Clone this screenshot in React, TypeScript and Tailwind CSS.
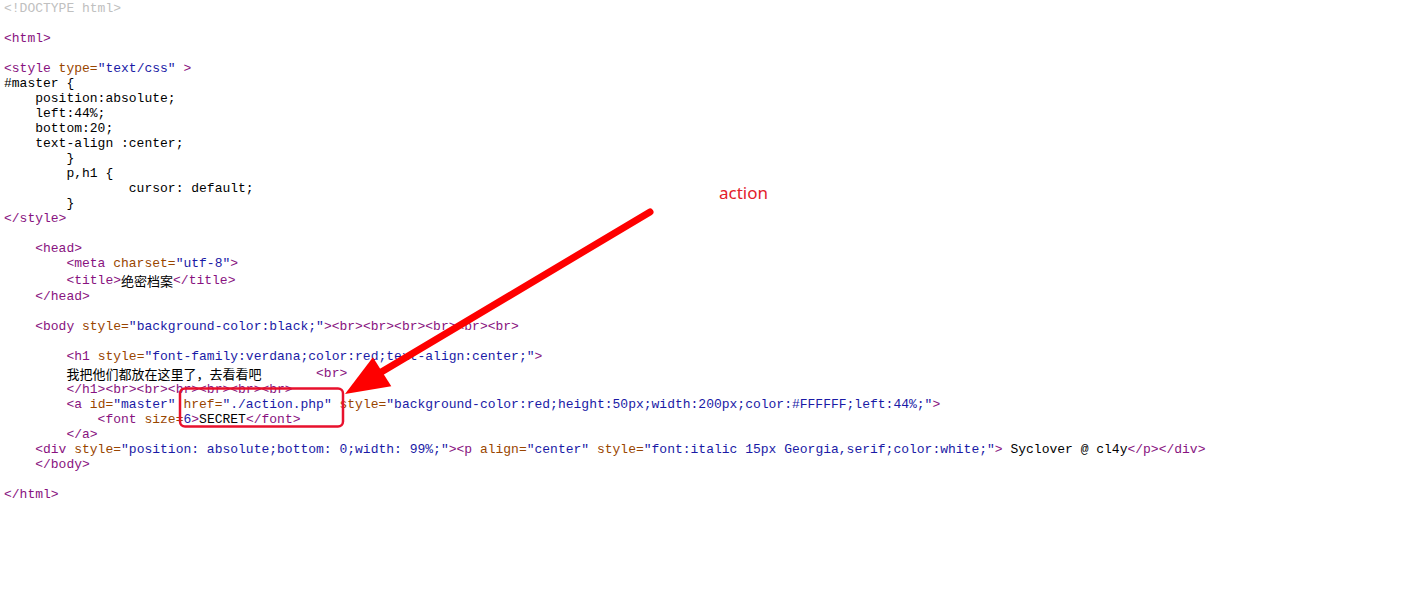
type Seg = [string, string];

// d: doctype, t: tag, a: attribute name, v: attribute value, x: plain text, c: cjk text
const tone: Record<string, string> = {
  d: 'text-[#c0c0c0]',
  t: 'text-[#881280]',
  a: 'text-[#994500]',
  v: 'text-[#1a1aa6]',
  x: 'text-black',
  c: "text-black font-['Noto_Sans_CJK_SC',sans-serif]",
};

const lines: { h?: string; segs: Seg[] }[] = [
  { segs: [['d', '<!DOCTYPE html>']] },
  { segs: [] },
  { segs: [['t', '<html>']] },
  { segs: [] },
  { segs: [['t', '<style '], ['a', 'type='], ['v', '"text/css"'], ['t', ' >']] },
  { segs: [['x', '#master {']] },
  { segs: [['x', '    position:absolute;']] },
  { segs: [['x', '    left:44%;']] },
  { segs: [['x', '    bottom:20;']] },
  { segs: [['x', '    text-align :center;']] },
  { segs: [['x', '        }']] },
  { segs: [['x', '        p,h1 {']] },
  { segs: [['x', '                cursor: default;']] },
  { segs: [['x', '        }']] },
  { segs: [['t', '</style>']] },
  { segs: [] },
  { segs: [['t', '    <head>']] },
  { segs: [['t', '        <meta '], ['a', 'charset='], ['v', '"utf-8"'], ['t', '>']] },
  { h: 'h-[18px]', segs: [['t', '        <title>'], ['c', '绝密档案'], ['t', '</title>']] },
  { segs: [['t', '    </head>']] },
  { segs: [] },
  {
    segs: [
      ['t', '    <body '],
      ['a', 'style='],
      ['v', '"background-color:black;"'],
      ['t', '><br><br><br><br><br><br>'],
    ],
  },
  { segs: [] },
  {
    segs: [
      ['t', '        <h1 '],
      ['a', 'style='],
      ['v', '"font-family:verdana;color:red;text-align:center;"'],
      ['t', '>'],
    ],
  },
  { h: 'h-[18px]', segs: [['x', '        '], ['c', '我把他们都放在这里了，去看看吧'], ['x', '       '], ['t', '<br>']] },
  { segs: [['t', '        </h1><br><br><br><br><br><br>']] },
  {
    segs: [
      ['t', '        <a '],
      ['a', 'id='],
      ['v', '"master"'],
      ['a', ' href='],
      ['v', '"./action.php"'],
      ['a', ' style='],
      ['v', '"background-color:red;height:50px;width:200px;color:#FFFFFF;left:44%;"'],
      ['t', '>'],
    ],
  },
  { segs: [['t', '            <font '], ['a', 'size='], ['v', '6'], ['t', '>'], ['x', 'SECRET'], ['t', '</font>']] },
  { segs: [['t', '        </a>']] },
  {
    segs: [
      ['t', '    <div '],
      ['a', 'style='],
      ['v', '"position: absolute;bottom: 0;width: 99%;"'],
      ['t', '><p '],
      ['a', 'align='],
      ['v', '"center"'],
      ['a', ' style='],
      ['v', '"font:italic 15px Georgia,serif;color:white;"'],
      ['t', '>'],
      ['x', ' Syclover @ cl4y'],
      ['t', '</p></div>'],
    ],
  },
  { segs: [['t', '    </body>']] },
  { segs: [] },
  { segs: [['t', '</html>']] },
];

function Arrow() {
  return (
    <svg
      className="absolute inset-0 pointer-events-none"
      width={1408}
      height={592}
      viewBox="0 0 1408 592"
    >
      <rect x={180} y={388.5} width={163} height={38} rx={5} fill="none" stroke="#e8112d" strokeWidth={2.5} />
      <line x1={650} y1={212} x2={378} y2={374} stroke="#fe0000" strokeWidth={7} strokeLinecap="round" />
      <polygon points="345,394 372.9,357.3 391.3,386.2" fill="#fe0000" />
    </svg>
  );
}

export default function App() {
  return (
    <div className="relative w-[1408px] h-[592px] bg-white overflow-hidden">
      <div className="pt-[1px] pl-[4px] font-['Liberation_Mono',monospace] text-[13px] leading-[15px] whitespace-pre">
        {lines.map((line, i) => (
          <div key={i} className={`${line.h ?? 'h-[15px]'} flex items-center`}>
            {line.segs.map(([k, text], j) => (
              <span key={j} className={tone[k]}>
                {text}
              </span>
            ))}
          </div>
        ))}
      </div>
      <Arrow />
      <div className="absolute left-[719px] top-[181px] font-['Noto_Sans',sans-serif] text-[17px] leading-[24px] text-[#e3202b]">
        action
      </div>
    </div>
  );
}
